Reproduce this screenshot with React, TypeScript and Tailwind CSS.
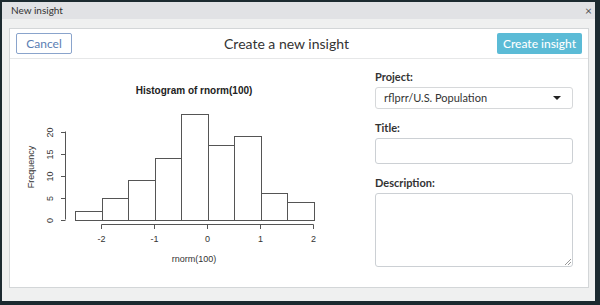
import React from "react";

const counts = [2, 5, 9, 14, 24, 17, 19, 6, 4];
const baseY = 219.5;
const perCount = 4.4;
const binW = 26.5;
const x0 = 75;

function Histogram() {
  return (
    <svg width={350} height={229} viewBox="10 59 350 229" className="shrink-0">
      <text
        x={194}
        y={94}
        textAnchor="middle"
        fontSize={10}
        fontWeight="bold"
        fontFamily="'Liberation Sans', Arial, sans-serif"
        fill="#222"
      >
        Histogram of rnorm(100)
      </text>

      {/* bars */}
      {counts.map((c, i) => {
        const h = c * perCount;
        return (
          <rect
            key={i}
            x={Math.round(x0 + i * binW) + 0.5}
            y={Math.round(baseY - h) + 0.5}
            width={Math.round(x0 + (i + 1) * binW) - Math.round(x0 + i * binW)}
            height={Math.round(baseY) - Math.round(baseY - h)}
            fill="#fff"
            stroke="#555"
            strokeWidth={1}
          />
        );
      })}

      {/* y axis */}
      <line x1={65.5} y1={131.5} x2={65.5} y2={219.5} stroke="#555" />
      {[0, 5, 10, 15, 20].map((v) => {
        const y = Math.round(baseY - v * perCount) + 0.5;
        return (
          <g key={v}>
            <line x1={61} y1={y} x2={65.5} y2={y} stroke="#555" />
            <text
              x={0}
              y={0}
              transform={`translate(53 ${y}) rotate(-90)`}
              textAnchor="middle"
              fontSize={9}
              fontFamily="'Liberation Sans', Arial, sans-serif"
              fill="#333"
            >
              {v}
            </text>
          </g>
        );
      })}
      <text
        transform="translate(34 167) rotate(-90)"
        textAnchor="middle"
        fontSize={9}
        fontFamily="'Liberation Sans', Arial, sans-serif"
        fill="#333"
      >
        Frequency
      </text>

      {/* x axis */}
      <line x1={101.5} y1={224.5} x2={313.5} y2={224.5} stroke="#555" />
      {[-2, -1, 0, 1, 2].map((k) => {
        const x = Math.round(101.3 + (k + 2) * 53) + 0.5;
        return (
          <g key={k}>
            <line x1={x} y1={224.5} x2={x} y2={229} stroke="#555" />
            <text
              x={x}
              y={242}
              textAnchor="middle"
              fontSize={9}
              fontFamily="'Liberation Sans', Arial, sans-serif"
              fill="#333"
            >
              {k}
            </text>
          </g>
        );
      })}
      <text
        x={194}
        y={262}
        textAnchor="middle"
        fontSize={9}
        fontFamily="'Liberation Sans', Arial, sans-serif"
        fill="#333"
      >
        rnorm(100)
      </text>
    </svg>
  );
}

export default function App() {
  return (
    <div
      className="w-[600px] h-[305px] bg-[#1c2a30] pt-[2px] pl-[2px] overflow-hidden"
      style={{ fontFamily: "Lato, 'Open Sans', sans-serif" }}
    >
      <div className="w-[593px] h-[299px] bg-[#eff0f0] flex flex-col">
        {/* title bar */}
        <div className="h-[17px] bg-[#e1e2e5] flex items-center justify-between pl-[9px] pr-[3px] text-[10px] text-[#333]">
          <span>New insight</span>
          <span className="text-[12px] text-[#555] leading-none">×</span>
        </div>

        <div className="pt-[9px] pl-[7px] pr-[6px]">
          <div className="h-[260px] bg-white border border-[#d3d6d8] flex flex-col">
            {/* header */}
            <div className="h-[30px] border-b border-[#e6e7e8] flex items-center justify-between px-[6px] shrink-0">
              <button className="w-[56px] h-[21px] border border-[#8aa4cc] rounded-[2px] bg-white text-[12px] text-[#5a7db3]">
                Cancel
              </button>
              <div className="text-[14px] text-[#333] pl-[4px]">Create a new insight</div>
              <button className="w-[85px] h-[21px] rounded-[2px] bg-[#5bbbd6] text-[12px] font-medium text-white">
                Create insight
              </button>
            </div>

            {/* body */}
            <div className="flex flex-1">
              <Histogram />
              <div className="pl-[15px] pt-[11px] w-[213px] flex flex-col text-[#333]">
                <label className="text-[11px] font-bold leading-[14px]">Project:</label>
                <div className="mt-[3px] h-[22px] border border-[#d6d8da] rounded-[3px] flex items-center justify-between pl-[8px] pr-[11px]">
                  <span className="text-[11px]">rflprr/U.S. Population</span>
                  <span className="w-0 h-0 border-l-[4px] border-r-[4px] border-t-[4px] border-l-transparent border-r-transparent border-t-[#222]" />
                </div>
                <label className="mt-[12px] text-[11px] font-bold leading-[14px]">Title:</label>
                <div className="mt-[3px] h-[26px] border border-[#ccd0d4] rounded-[3px]" />
                <label className="mt-[12px] text-[11px] font-bold leading-[14px]">Description:</label>
                <div className="mt-[3px] h-[74px] border border-[#ccd0d4] rounded-[3px] relative">
                  <svg width={6} height={6} className="absolute right-[1px] bottom-[1px]">
                    <line x1={0} y1={6} x2={6} y2={0} stroke="#999" />
                    <line x1={3} y1={6} x2={6} y2={3} stroke="#999" />
                  </svg>
                </div>
              </div>
            </div>
          </div>
        </div>
      </div>
    </div>
  );
}
